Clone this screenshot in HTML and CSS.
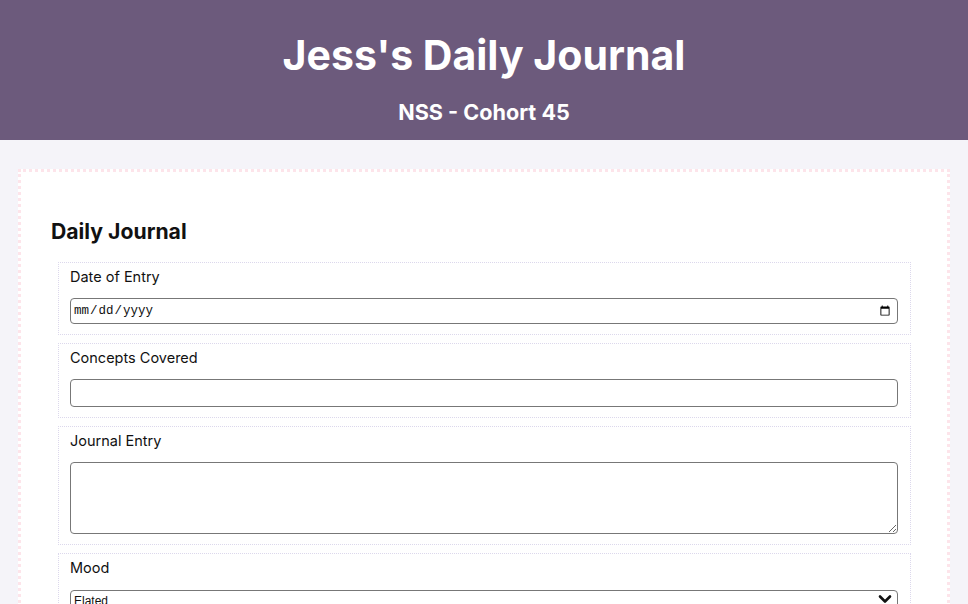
FILE: index.html
```html
<!DOCTYPE html>
<html lang="en">
<head>
<meta charset="utf-8">
<title>Jess's Daily Journal</title>
<link rel="stylesheet" href="styles.css">
</head>
<body>
<header class="site-header">
  <h1 class="site-title">Jess's Daily Journal</h1>
  <p class="site-subtitle">NSS - Cohort 45</p>
</header>
<main class="page">
  <section class="journal">
    <h2 class="journal-title">Daily Journal</h2>
    <form class="journal-form">
      <fieldset class="field">
        <label class="field-label" for="date">Date of Entry</label>
        <input class="field-input field-date" type="date" id="date">
      </fieldset>
      <fieldset class="field">
        <label class="field-label" for="concepts">Concepts Covered</label>
        <input class="field-input field-text" type="text" id="concepts">
      </fieldset>
      <fieldset class="field">
        <label class="field-label" for="entry">Journal Entry</label>
        <textarea class="field-input field-area" id="entry"></textarea>
      </fieldset>
      <fieldset class="field">
        <label class="field-label" for="mood">Mood</label>
        <div class="select-wrap">
          <select class="field-input field-select" id="mood">
            <option>Elated</option>
            <option>Happy</option>
            <option>Okay</option>
            <option>Sad</option>
          </select>
          <svg class="select-chevron" width="14" height="10" viewBox="0 0 14 10" aria-hidden="true">
            <path d="M2 2.5 L7 7.5 L12 2.5" fill="none" stroke="#111" stroke-width="2.6" stroke-linecap="round" stroke-linejoin="round"/>
          </svg>
        </div>
      </fieldset>
    </form>
  </section>
</main>
</body>
</html>
```

FILE: styles.css
```css
* { box-sizing: border-box; }

body {
  margin: 0;
  background: #f5f4f9;
  font-family: Inter, "Noto Sans", sans-serif;
  color: #111;
}

.site-header {
  height: 140px;
  background: #6c5a7c;
  color: #fff;
  text-align: center;
  padding-top: 30px;
}

.site-title {
  margin: 0;
  font-size: 41px;
  line-height: 50px;
  font-weight: 700;
}

.site-subtitle {
  margin: 18px 0 0;
  font-size: 21.6px;
  line-height: 28px;
  font-weight: 700;
}

.page {
  padding: 29px 18px 0;
}

.journal {
  background: #fff;
  border: 3px dotted #fde4ea;
  padding: 45px 30px 30px;
}

.journal-title {
  margin: 0 0 17px;
  font-size: 21.2px;
  line-height: 28px;
  font-weight: 700;
}

.journal-form {
  display: flex;
  flex-direction: column;
  gap: 8px;
  margin: 0 6px 0 7px;
}

.field {
  margin: 0;
  border: 1px dotted #dcd8ec;
  padding: 5px 12px 10px 11px;
  display: flex;
  flex-direction: column;
  gap: 12px;
  min-width: 0;
}

.field-label {
  font-size: 14.5px;
  line-height: 18px;
  color: #111;
}

.field-input {
  width: 100%;
  border: 1px solid #777;
  border-radius: 4px;
  background: #fff;
  margin: 0;
}

.field-date {
  height: 26px;
  padding: 0 4px 0 2px;
  font-family: "Liberation Mono", "DejaVu Sans Mono", monospace;
  font-size: 12.5px;
  color: #111;
}

.field-text {
  height: 28px;
  padding: 0 4px;
  font-size: 14px;
}

.field-area {
  height: 72px;
  display: block;
  resize: vertical;
  font-family: inherit;
}

.select-wrap {
  position: relative;
}

.field-select {
  appearance: none;
  -webkit-appearance: none;
  height: 22px;
  padding: 0 28px 0 3px;
  font-family: "Liberation Sans", Arial, sans-serif;
  font-size: 12px;
  color: #111;
}

.select-chevron {
  position: absolute;
  right: 6px;
  top: 5px;
  pointer-events: none;
}
```
